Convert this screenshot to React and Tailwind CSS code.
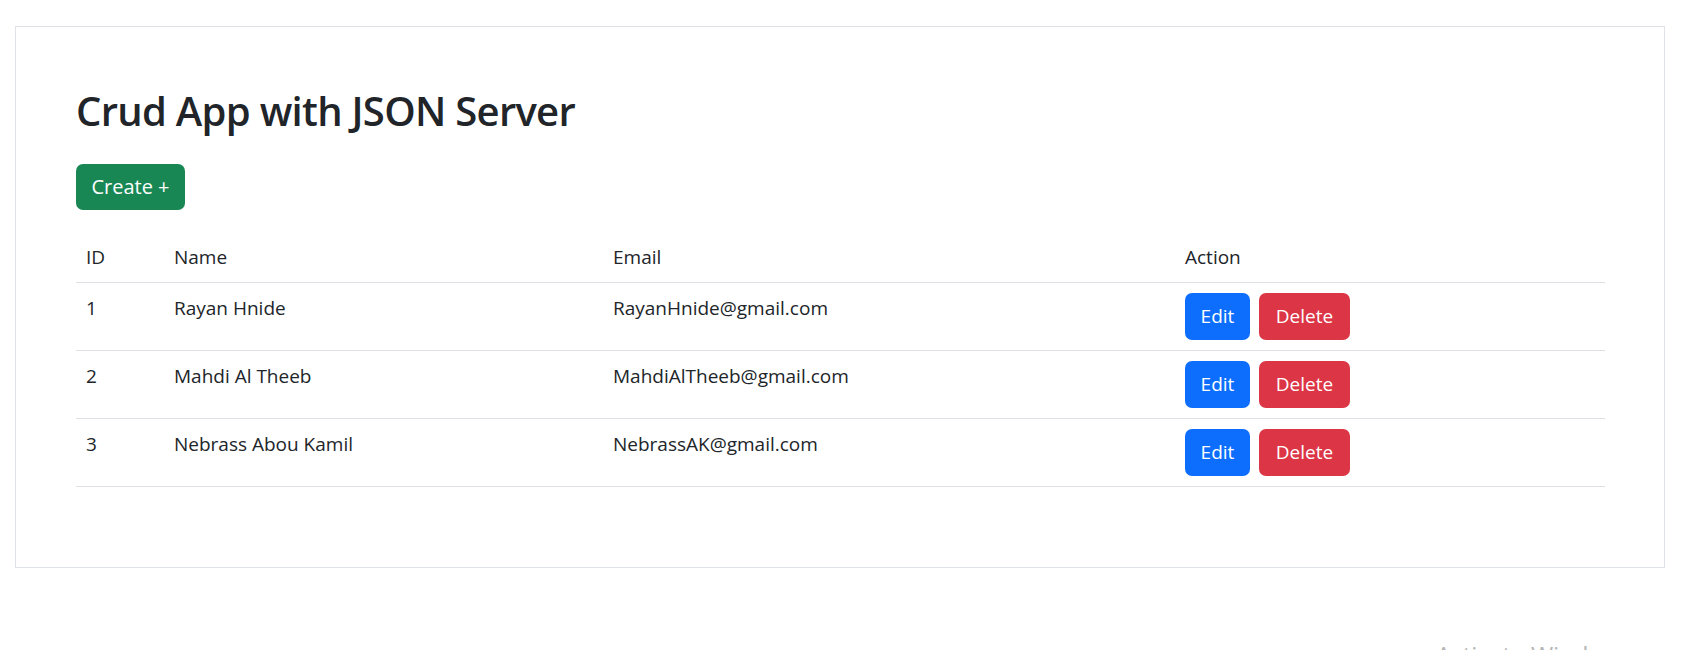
const users = [
  { id: 1, name: "Rayan Hnide", email: "RayanHnide@gmail.com" },
  { id: 2, name: "Mahdi Al Theeb", email: "MahdiAlTheeb@gmail.com" },
  { id: 3, name: "Nebrass Abou Kamil", email: "NebrassAK@gmail.com" },
];

export default function App() {
  return (
    <div
      className="relative h-[650px] overflow-hidden bg-white text-[#212529]"
      style={{ fontFamily: '"Open Sans", "Noto Sans", sans-serif' }}
    >
      <div className="pt-[26px] pl-[15px]">
        {/* Card */}
        <div className="w-[1650px] border border-[#dee2e6] p-[60px]">
          <h1 className="text-[40px] leading-[48px] font-semibold tracking-[-0.7px] mb-[29px]">
            Crud App with JSON Server
          </h1>

          <button className="w-[109px] h-[46px] rounded-[7px] bg-[#198754] text-white text-[20px] leading-none">
            Create +
          </button>

          <table className="w-[1529px] mt-[22px] mb-[20px] text-[19px] leading-[30px] border-collapse">
            <thead>
              <tr className="border-b border-[#dee2e6]">
                <th className="w-[88px] px-[10px] py-[10px] text-left font-normal">ID</th>
                <th className="w-[439px] px-[10px] py-[10px] text-left font-normal">Name</th>
                <th className="w-[572px] px-[10px] py-[10px] text-left font-normal">Email</th>
                <th className="px-[10px] py-[10px] text-left font-normal">Action</th>
              </tr>
            </thead>
            <tbody>
              {users.map((u) => (
                <tr key={u.id} className="border-b border-[#dee2e6]">
                  <td className="px-[10px] py-[10px] align-top">{u.id}</td>
                  <td className="px-[10px] py-[10px] align-top">{u.name}</td>
                  <td className="px-[10px] py-[10px] align-top">{u.email}</td>
                  <td className="px-[10px] py-[10px] align-top">
                    <div className="flex gap-[9px]">
                      <button className="w-[65px] h-[47px] rounded-[7px] bg-[#0d6efd] text-white text-[19px] leading-none">
                        Edit
                      </button>
                      <button className="w-[91px] h-[47px] rounded-[7px] bg-[#dc3545] text-white text-[19px] leading-none">
                        Delete
                      </button>
                    </div>
                  </td>
                </tr>
              ))}
            </tbody>
          </table>
        </div>
      </div>

      {/* OS watermark, mostly cut off at the bottom edge */}
      <div className="absolute left-[1436px] top-[643px] text-[24px] leading-none text-[#b5b5b5] whitespace-nowrap">
        Activate Windows
      </div>
    </div>
  );
}
